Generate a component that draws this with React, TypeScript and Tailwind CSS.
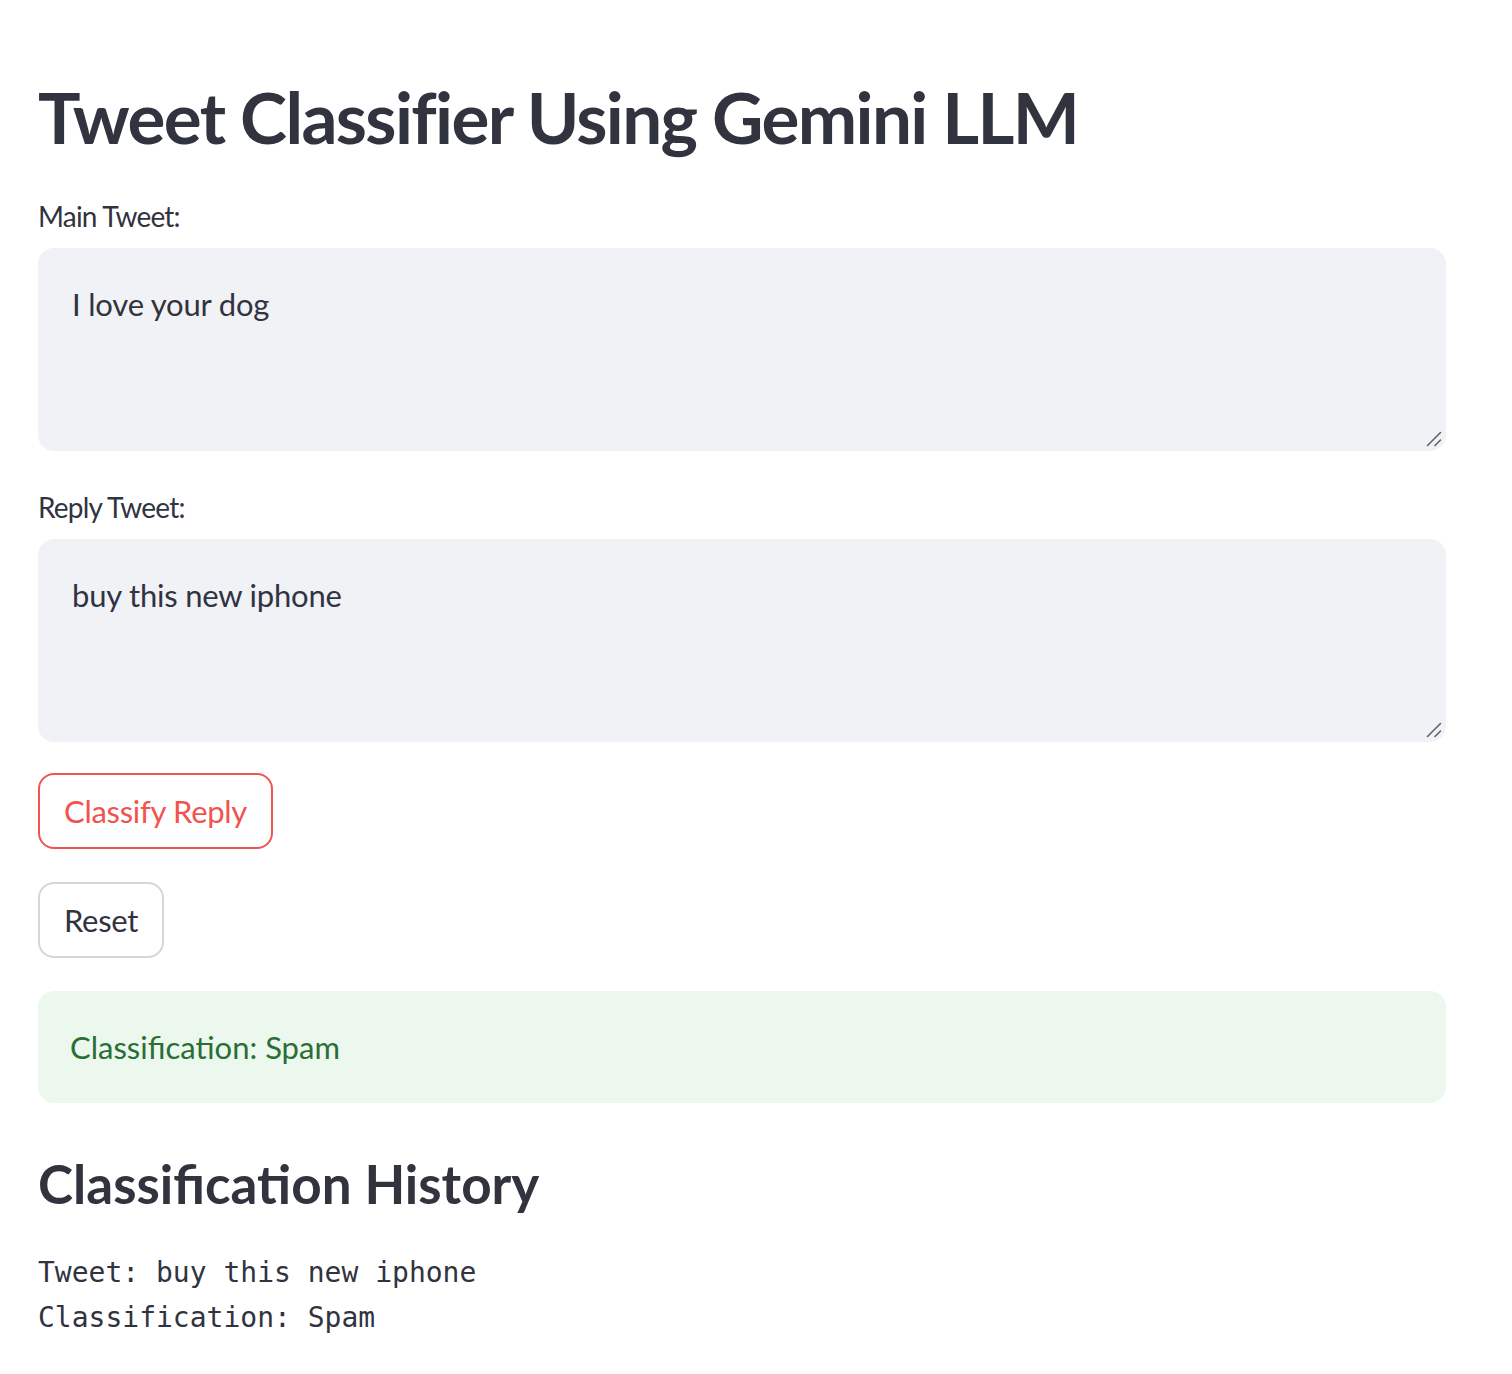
import { useState } from "react";

const sans = "font-['Lato','Noto_Sans',sans-serif]";

function ResizeGrip() {
  return (
    <svg
      className="pointer-events-none absolute bottom-[4px] right-[4px]"
      width="16"
      height="16"
      viewBox="0 0 16 16"
    >
      <path d="M1.5 14.5 L14.5 1.5" stroke="#5f6168" strokeWidth="1.6" strokeLinecap="round" />
      <path d="M9 14.5 L14.5 9" stroke="#5f6168" strokeWidth="1.6" strokeLinecap="round" />
    </svg>
  );
}

function TweetField({ label, value }: { label: string; value: string }) {
  return (
    <div className="flex flex-col">
      <label className={`${sans} text-[28px] leading-[40px] tracking-[-0.8px] text-[#31333f]`}>
        {label}
      </label>
      <div className="relative mt-[12px]">
        <textarea
          defaultValue={value}
          className={`${sans} block h-[203px] w-full resize-none rounded-[16px] bg-[#f0f2f6] px-[34px] pt-[34px] text-[31px] leading-[44px] tracking-[-0.2px] text-[#31333f] outline-none`}
        />
        <ResizeGrip />
      </div>
    </div>
  );
}

export default function App() {
  const [history] = useState([{ tweet: "buy this new iphone", label: "Spam" }]);

  return (
    <div className="min-h-screen w-full bg-white pl-[38px] pr-[66px] pt-[70px] pb-[40px]">
      <h1 className={`${sans} text-[71px] font-bold leading-[94px] tracking-[-1.65px] text-[#31333f]`}>
        Tweet Classifier Using Gemini LLM
      </h1>

      <div className="mt-[32px]">
        <TweetField label="Main Tweet:" value="I love your dog" />
      </div>
      <div className="mt-[36px]">
        <TweetField label="Reply Tweet:" value="buy this new iphone" />
      </div>

      <div className="mt-[31px] flex flex-col items-start gap-[33px]">
        <button
          className={`${sans} h-[76px] rounded-[16px] border-2 border-[#f0544f] bg-white px-[24px] text-[31px] tracking-[-0.3px] text-[#f0544f]`}
        >
          Classify Reply
        </button>
        <button
          className={`${sans} h-[76px] rounded-[16px] border-2 border-[#d6d6d9] bg-white px-[24px] text-[31px] tracking-[-0.3px] text-[#31333f]`}
        >
          Reset
        </button>
      </div>

      <div className="mt-[33px] flex h-[112px] items-center rounded-[16px] bg-[#ecf7ee] px-[32px]">
        <span className={`${sans} text-[31px] text-[#2a6e36]`}>Classification: Spam</span>
      </div>

      <h3 className={`${sans} mt-[46px] text-[53px] font-bold leading-[70px] text-[#31333f]`}>
        Classification History
      </h3>

      <div className="mt-[31px] font-['DejaVu_Sans_Mono','Liberation_Mono',monospace] text-[28px] leading-[45px] text-[#31333f]">
        {history.map((h, i) => (
          <div key={i}>
            <div>Tweet: {h.tweet}</div>
            <div>Classification: {h.label}</div>
          </div>
        ))}
      </div>
    </div>
  );
}
